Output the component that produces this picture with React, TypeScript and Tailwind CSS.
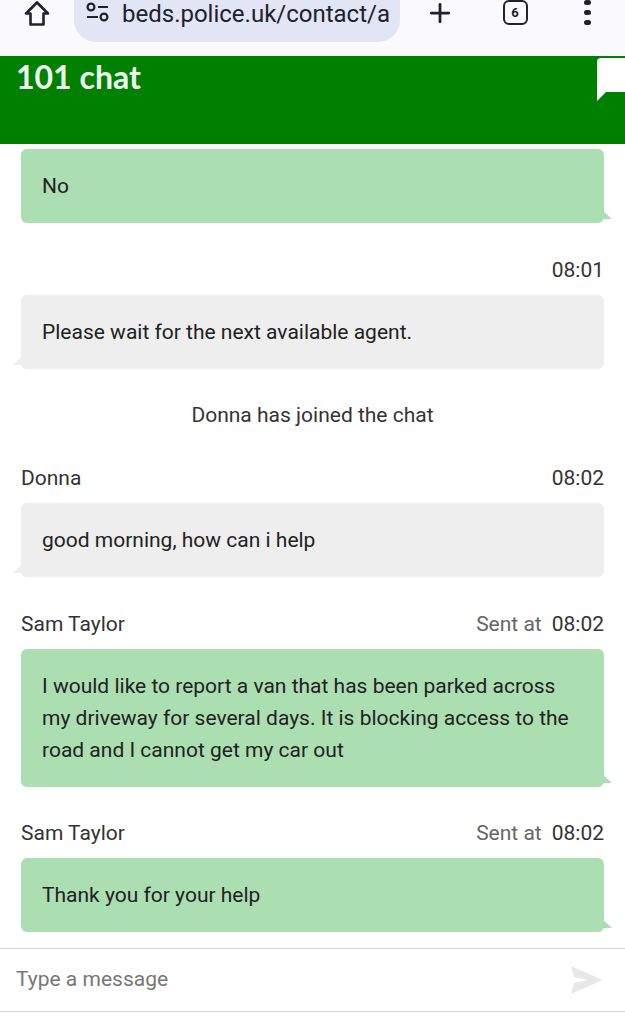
import React from 'react';
import { Plus } from 'lucide-react';

const font = { fontFamily: 'Roboto, "Liberation Sans", sans-serif' };

function Bubble({ side, children }: { side: 'in' | 'out'; children: React.ReactNode }) {
  const out = side === 'out';
  return (
    <div className="relative">
      <div className={`rounded-md px-[21px] py-[21px] text-[21px] leading-[32px] text-[#222] ${out ? 'bg-[#abdfb1]' : 'bg-[#eeeeee]'}`}>
        {children}
      </div>
      {out ? (
        <div className="absolute right-[-8px] bottom-[4px] h-0 w-0 border-l-[10px] border-t-[9px] border-l-transparent border-t-[#abdfb1] rotate-180" />
      ) : (
        <div className="absolute left-[-8px] bottom-[4px] h-0 w-0 border-r-[10px] border-t-[9px] border-r-transparent border-t-[#eeeeee] rotate-180" />
      )}
    </div>
  );
}

function Meta({ name, time, sent }: { name?: string; time: string; sent?: boolean }) {
  return (
    <div className="flex items-center justify-between text-[21px] leading-[28px] text-[#333] mb-[11px]">
      <span>{name}</span>
      <span>
        {sent && <span className="mr-[10px] text-[#666]">Sent at</span>}
        {time}
      </span>
    </div>
  );
}

export default function App() {
  return (
    <div style={font} className="w-[625px] h-[1024px] overflow-hidden bg-white flex flex-col">
      <div className="h-[56px] shrink-0 flex items-start bg-[#f9f9fe] text-[#20212b]">
        <div className="w-[74px] h-[27px] flex items-center justify-center">
          <svg width="28" height="28" viewBox="0 0 28 28" fill="none" stroke="currentColor" strokeWidth="2.6" strokeLinejoin="round">
            <path d="M14 2.5 3 13.5h4.5v11h13v-11H25z" />
          </svg>
        </div>
        <div className="w-[326px] h-[42px] rounded-b-[22px] bg-[#e2e5f3] flex items-start pl-[12px]">
          <svg className="mt-[2px] shrink-0" width="24" height="22" viewBox="0 0 24 22" fill="none" stroke="currentColor" strokeWidth="2.2">
            <circle cx="5" cy="5" r="3.4" />
            <path d="M12 5h10M1 15h11" />
            <circle cx="18" cy="15" r="3.4" />
          </svg>
          <div className="ml-[12px] w-[267px] h-[34px] overflow-hidden text-[24px] leading-[28px] whitespace-nowrap">beds.police.uk/contact/a</div>
        </div>
        <div className="w-[80px] h-[25px] flex items-center justify-center">
          <Plus size={30} strokeWidth={2.2} />
        </div>
        <div className="w-[70px] h-[25px] flex items-center justify-center">
          <div className="w-[25px] h-[25px] rounded-md border-[2.5px] border-[#20212b] flex items-center justify-center text-[13px] font-bold">6</div>
        </div>
        <div className="w-[75px] h-[25px] flex flex-col items-center justify-center gap-[5px]">
          <span className="w-[7px] h-[7px] rounded-full bg-[#20212b]" />
          <span className="w-[7px] h-[7px] rounded-full bg-[#20212b]" />
          <span className="w-[7px] h-[7px] rounded-full bg-[#20212b]" />
        </div>
      </div>
      <div className="relative h-[88px] shrink-0 bg-[#008000] pl-[16px] pt-[1px]">
        <h1 className="text-[32px] leading-[40px] font-bold text-[#eefbee]" style={{ fontFamily: 'Lato, sans-serif' }}>101 chat</h1>
        <svg className="absolute right-0 top-[2px]" width="30" height="44" viewBox="0 0 30 44" fill="#ffffff">
          <path d="M30 0H6a4 4 0 0 0-4 4v39l9-9h19z" />
        </svg>
      </div>
      <div className="flex-1 min-h-0 overflow-hidden px-[21px] pt-[5px] flex flex-col">
        <Bubble side="out">No</Bubble>
        <div className="mt-[33px]"><Meta time="08:01" /></div>
        <Bubble side="in">Please wait for the next available agent.</Bubble>
        <div className="mt-[32px] text-center text-[21px] leading-[28px] text-[#333]">Donna has joined the chat</div>
        <div className="mt-[35px]"><Meta name="Donna" time="08:02" /></div>
        <Bubble side="in">good morning, how can i help</Bubble>
        <div className="mt-[33px]"><Meta name="Sam Taylor" time="08:02" sent /></div>
        <Bubble side="out">
          I would like to report a van that has been parked across my driveway for several days. It is blocking access to the road and I cannot get my car out
        </Bubble>
        <div className="mt-[32px]"><Meta name="Sam Taylor" time="08:02" sent /></div>
        <Bubble side="out">Thank you for your help</Bubble>
      </div>
      <div className="h-[64px] shrink-0 border-y border-[#d4d4d4] flex items-center justify-between pl-[16px] pr-[22px] bg-white">
        <span className="text-[21px] text-[#777]">Type a message</span>
        <svg width="32" height="28" viewBox="0 0 32 28" fill="#e8e8e8">
          <path d="M0 0 32 14 0 28l3-11 14-3-14-3z" />
        </svg>
      </div>
      <div className="h-[12px] shrink-0 bg-white" />
    </div>
  );
}
